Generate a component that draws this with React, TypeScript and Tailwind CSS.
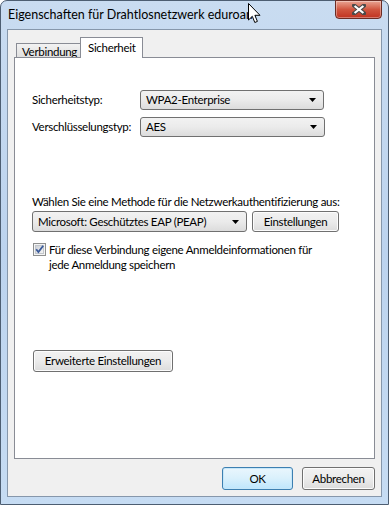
import React from 'react'

const font = { fontFamily: 'Lato, "Noto Sans", "Liberation Sans", sans-serif' }

function Arrow() {
  return (
    <svg width="7" height="4" viewBox="0 0 7 4" className="shrink-0">
      <path d="M0 0 H7 L3.5 4 Z" fill="#000" />
    </svg>
  )
}

function Combo({ value, className }: { value: string; className: string }) {
  return (
    <div
      className={`flex items-center justify-between rounded-[3px] border border-[#707070] bg-gradient-to-b from-[#f2f2f2] via-[#ebebeb] to-[#dcdcdc] pl-[5px] pr-[7px] text-black ${className}`}
    >
      <span className="whitespace-nowrap leading-none">{value}</span>
      <Arrow />
    </div>
  )
}

function Btn({ label, className, isDefault }: { label: string; className: string; isDefault?: boolean }) {
  return (
    <div
      className={`flex items-center justify-center whitespace-nowrap rounded-[3px] border text-[11.5px] tracking-[-0.3px] text-black ${
        isDefault
          ? 'border-[#3c7fb1] bg-gradient-to-b from-[#eaf6fd] via-[#d9f0fc] to-[#bee6fd] shadow-[inset_0_0_0_1px_#c6e7f9]'
          : 'border-[#707070] bg-gradient-to-b from-[#f2f2f2] via-[#ebebeb] to-[#dcdcdc] shadow-[inset_0_0_0_1px_#fcfcfc]'
      } ${className}`}
    >
      {label}
    </div>
  )
}

export default function App() {
  return (
    <div className="relative h-[505px] w-[389px] overflow-hidden bg-white" style={font}>
      <div className="flex h-full w-full flex-col rounded-t-[7px] border border-[#4d5e72] bg-gradient-to-b from-[#c9dcf1] via-[#bcd3ee] to-[#c6dcf3]">
        {/* title bar */}
        <div className="flex h-[28px] items-start justify-between">
          <div className="whitespace-nowrap pl-[7px] pt-[8px] text-[12.5px] leading-none text-black">
            Eigenschaften für Drahtlosnetzwerk eduroam
          </div>
          <div className="mr-[6px] mt-[-1px] flex h-[19px] w-[47px] items-center justify-center rounded-b-[4px] border border-[#6b2c24] bg-gradient-to-b from-[#e8a493] via-[#d0553f] to-[#c0311f] shadow-[inset_0_0_0_1px_rgba(255,255,255,0.35)]">
            <svg width="14" height="11" viewBox="0 0 14 11">
              <path d="M2 1.5 L12 9.5 M12 1.5 L2 9.5" stroke="#4a4a4a" strokeWidth="4.2" strokeLinecap="square" />
              <path d="M2.6 2 L11.4 9 M11.4 2 L2.6 9" stroke="#fff" strokeWidth="2.2" />
            </svg>
          </div>
        </div>

        {/* client area */}
        <div className="mx-[6px] flex flex-1 flex-col border border-[#8697ab] bg-[#f0f0f0] px-[6px] pt-[7px] text-[11.5px] tracking-[-0.3px]">
          {/* tabs */}
          <div className="flex items-end pl-[2px]">
            <div className="mb-[-1px] flex h-[15px] w-[64px] items-center border border-r-0 border-b-0 border-[#898c95] bg-gradient-to-b from-[#f2f2f2] to-[#dedede] pl-[5px] pt-[1px] leading-none text-black">
              Verbindung
            </div>
            <div className="relative z-10 mb-[-1px] flex h-[21px] w-[63px] items-start border border-b-0 border-[#898c95] bg-white pl-[7px] pt-[4px] leading-none text-black">
              Sicherheit
            </div>
          </div>

          {/* panel */}
          <div className="flex h-[402px] flex-col border border-[#898c95] bg-white pl-[17px] text-black">
            <div className="mt-[32px] flex items-center">
              <span className="w-[109px] whitespace-nowrap">Sicherheitstyp:</span>
              <Combo value="WPA2-Enterprise" className="ml-[-1px] h-[20px] w-[184px]" />
            </div>
            <div className="mt-[7px] flex items-center">
              <span className="w-[108px] whitespace-nowrap">Verschlüsselungstyp:</span>
              <Combo value="AES" className="h-[20px] w-[185px]" />
            </div>

            <div className="mt-[57px] whitespace-nowrap leading-[16px]">Wählen Sie eine Methode für die Netzwerkauthentifizierung aus:</div>
            <div className="mt-[1px] flex items-center">
              <Combo value="Microsoft: Geschütztes EAP (PEAP)" className="h-[21px] w-[215px]" />
              <Btn label="Einstellungen" className="ml-[5px] h-[21px] w-[87px]" />
            </div>

            <div className="mt-[10px] flex items-start">
              <svg width="13" height="13" viewBox="0 0 13 13" className="ml-[1px] mt-[1px] shrink-0">
                <defs>
                  <linearGradient id="cb" x1="0" y1="0" x2="1" y2="1">
                    <stop offset="0" stopColor="#cbcfd5" />
                    <stop offset="1" stopColor="#f6f6f6" />
                  </linearGradient>
                </defs>
                <rect x="0.5" y="0.5" width="12" height="12" fill="#f4f4f4" stroke="#8e8f8f" />
                <rect x="2.5" y="2.5" width="8" height="8" fill="url(#cb)" stroke="#c2c6cc" strokeWidth="1" />
                <path d="M3.2 6.2 L5.4 9 L10.2 2.8" fill="none" stroke="#3a5a9a" strokeWidth="1.8" />
              </svg>
              <div className="ml-[3px] whitespace-nowrap leading-[15px]">
                Für diese Verbindung eigene Anmeldeinformationen für
                <br />
                jede Anmeldung speichern
              </div>
            </div>

            <Btn label="Erweiterte Einstellungen" className="mt-[78px] ml-[1px] h-[22px] w-[140px]" />
          </div>

          {/* bottom buttons */}
          <div className="mt-[8px] flex justify-end gap-[9px] pr-0">
            <Btn label="OK" isDefault className="h-[23px] w-[71px]" />
            <Btn label="Abbrechen" className="h-[23px] w-[73px]" />
          </div>
        </div>

        <div className="h-[7px]" />
      </div>

      {/* mouse cursor */}
      <svg width="14" height="22" viewBox="0 0 14 22" className="absolute left-[248px] top-[3px]">
        <path
          d="M0.5 0.5 V17 L4.3 13.3 L6.8 19.5 L9.4 18.4 L6.9 12.3 H12 Z"
          fill="#fff"
          stroke="#000"
          strokeWidth="1"
          strokeLinejoin="miter"
        />
      </svg>
    </div>
  )
}
